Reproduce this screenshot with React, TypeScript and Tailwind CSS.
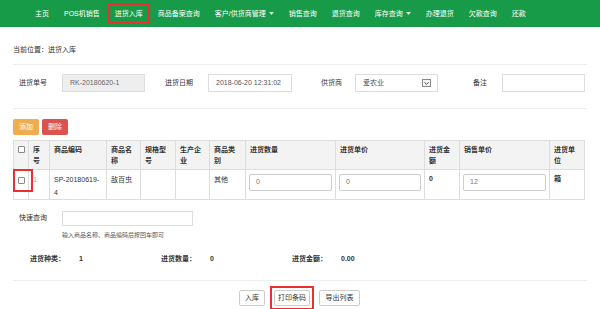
import { ChevronDown } from 'lucide-react';

const navItems = [
  { label: '主页' },
  { label: 'POS机销售' },
  { label: '进货入库', active: true },
  { label: '商品备案查询' },
  { label: '客户/供货商管理', caret: true },
  { label: '销售查询' },
  { label: '退货查询' },
  { label: '库存查询', caret: true },
  { label: '办理退货' },
  { label: '欠款查询' },
  { label: '还款' },
];

const headers = [
  { label: '', w: 'w-[15px]' },
  { label: '序号', w: 'w-[21px]' },
  { label: '商品编码', w: 'w-[57px]' },
  { label: '商品名称', w: 'w-[34px]' },
  { label: '规格型号', w: 'w-[35px]' },
  { label: '生产企业', w: 'w-[34px]' },
  { label: '商品类别', w: 'w-[36px]' },
  { label: '进货数量', w: 'w-[90px]' },
  { label: '进货单价', w: 'w-[89px]' },
  { label: '进货金额', w: 'w-[35px]' },
  { label: '销售单价', w: 'w-[90px]' },
  { label: '进货单位', w: 'w-[35px]' },
];

function Caret() {
  return (
    <svg width="5" height="3" viewBox="0 0 5 3" className="ml-[3px] fill-white/80">
      <path d="M0 0h5L2.5 3z" />
    </svg>
  );
}

function Checkbox() {
  return <span className="block h-[7px] w-[7px] rounded-[1px] border border-[#8a8a8a] bg-white" />;
}

function CellInput({ value }: { value: string }) {
  return (
    <div className="flex h-[17px] items-center rounded-[2px] border border-[#ccc] bg-white pl-[6px] text-[7px] font-normal text-[#777]">
      {value}
    </div>
  );
}

export default function App() {
  return (
    <div className="h-[309px] w-[600px] overflow-hidden bg-white font-['Liberation_Sans','Noto_Sans_CJK_SC',sans-serif] text-[7px] text-[#333]">
      <nav className="flex h-[27px] items-center gap-[15px] bg-[#189b48] pl-[35px] text-white">
        {navItems.map((item) =>
          item.active ? (
            <span
              key={item.label}
              className="-mx-[7px] border-2 border-[#ec2f2f] px-[5px] py-[4px] leading-[9px]"
            >
              {item.label}
            </span>
          ) : (
            <span key={item.label} className="flex items-center leading-[9px]">
              {item.label}
              {item.caret && <Caret />}
            </span>
          ),
        )}
      </nav>

      <div className="px-[13px]">
        <div className="mt-[18px] leading-[10px]">当前位置：进货入库</div>
        <div className="mt-[9px] h-px bg-[#eee]" />

        <div className="mt-[9px] flex h-[18px] items-center">
          <span className="w-[49px] pr-[15px] text-right">进货单号</span>
          <div className="flex h-full w-[83px] items-center border border-[#ddd] bg-[#eee] pl-[7px] text-[#666]">
            RK-20180620-1
          </div>
          <span className="w-[63px] pr-[15px] text-right">进货日期</span>
          <div className="flex h-full w-[84px] items-center border border-[#ddd] pl-[7px] text-[#555]">
            2018-06-20 12:31:02
          </div>
          <span className="w-[63px] pr-[13px] text-right">供货商</span>
          <div className="flex h-full w-[83px] items-center justify-between border border-[#ddd] pl-[7px] pr-[6px] text-[#555]">
            <span>爱农业</span>
            <span className="flex h-[8px] w-[9px] items-center justify-center border border-[#888] bg-[#f4f4f4]">
              <ChevronDown size={7} strokeWidth={3} color="#333" />
            </span>
          </div>
          <span className="w-[64px] pr-[15px] text-right">备注</span>
          <div className="h-full w-[83px] border border-[#ddd]" />
        </div>
        <div className="mt-[16px] h-px bg-[#eee]" />

        <div className="mt-[10px] flex gap-[3px]">
          <button className="h-[16px] w-[26px] rounded-[2px] bg-[#f0ad4e] text-[7px] text-white">添加</button>
          <button className="h-[16px] w-[26px] rounded-[2px] bg-[#d9534f] text-[7px] text-white">删除</button>
        </div>

        <table className="mt-[5px] w-[571px] table-fixed border-collapse border border-[#ddd]">
          <thead>
            <tr className="h-[28px] bg-[#f3f3f3]">
              {headers.map((h, i) => (
                <th
                  key={i}
                  className={`${h.w} border border-[#ddd] pb-[3px] pl-[4px] pr-[5px] pt-[3px] text-left align-top font-bold leading-[11px]`}
                >
                  {i === 0 ? (
                    <span className="mt-[2px] block">
                      <Checkbox />
                    </span>
                  ) : (
                    h.label
                  )}
                </th>
              ))}
            </tr>
          </thead>
          <tbody>
            <tr className="h-[28px]">
              <td className="relative border border-[#ddd] pl-[4px] pt-[7px] align-top">
                <Checkbox />
                <span className="absolute left-[-1px] top-[-1px] h-[23px] w-[20px] border-2 border-[#ec2f2f]" />
              </td>
              <td className="border border-[#ddd] pl-[4px] pt-[3px] align-top leading-[13px] text-[#aaa]">1</td>
              <td className="border border-[#ddd] pl-[4px] pr-[3px] pt-[3px] align-top leading-[13px] break-all">
                SP-20180619-4
              </td>
              <td className="border border-[#ddd] pl-[4px] pt-[3px] align-top leading-[13px]">敌百虫</td>
              <td className="border border-[#ddd]" />
              <td className="border border-[#ddd]" />
              <td className="border border-[#ddd] pl-[4px] pt-[3px] align-top leading-[13px]">其他</td>
              <td className="border border-[#ddd] px-[3px] pt-[4px] align-top">
                <CellInput value="0" />
              </td>
              <td className="border border-[#ddd] px-[3px] pt-[4px] align-top">
                <CellInput value="0" />
              </td>
              <td className="border border-[#ddd] pl-[4px] pt-[2px] align-top font-bold leading-[13px]">0</td>
              <td className="border border-[#ddd] px-[3px] pt-[4px] align-top">
                <CellInput value="12" />
              </td>
              <td className="border border-[#ddd] pl-[4px] pt-[2px] align-top font-bold leading-[13px]">箱</td>
            </tr>
          </tbody>
        </table>

        <div className="mt-[11px] flex h-[15px] items-center">
          <span className="w-[49px] pr-[15px] text-right">快速查询</span>
          <div className="h-full w-[131px] border border-[#ddd]" />
        </div>
        <div className="mt-[5px] pl-[49px] text-[6px] leading-[8px] text-[#555]">
          输入商品名称、商品编码后按回车即可
        </div>

        <div className="mt-[15px] flex pl-[17px] font-bold leading-[10px]">
          <div className="flex w-[131px]">
            <span className="w-[49px]">进货种类：</span>
            <span>1</span>
          </div>
          <div className="flex w-[131px]">
            <span className="w-[49px]">进货数量：</span>
            <span>0</span>
          </div>
          <div className="flex w-[131px]">
            <span className="w-[49px]">进货金额：</span>
            <span>0.00</span>
          </div>
        </div>
        <div className="mt-[16px] h-px bg-[#eee]" />

        <div className="mt-[5px] flex items-center justify-center gap-[5px] pr-[1px]">
          <button className="h-[16px] w-[26px] rounded-[2px] border border-[#ccc] bg-white text-[7px] text-[#333]">入库</button>
          <div className="border-2 border-[#ec2f2f] p-[2px]">
            <button className="block h-[16px] w-[36px] rounded-[2px] border border-[#ccc] bg-white text-[7px] text-[#333]">打印条码</button>
          </div>
          <button className="h-[16px] w-[41px] rounded-[2px] border border-[#ccc] bg-white text-[7px] text-[#333]">导出列表</button>
        </div>
      </div>
    </div>
  );
}
